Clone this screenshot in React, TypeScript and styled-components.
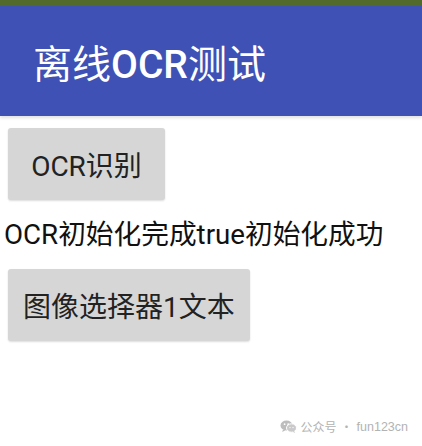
import React from 'react';
import styled, { createGlobalStyle } from 'styled-components';

const GlobalStyle = createGlobalStyle`
  html, body {
    margin: 0;
    padding: 0;
    background: #ffffff;
  }
  body {
    font-family: Roboto, 'Noto Sans CJK SC', sans-serif;
  }
`;

const Screen = styled.div`
  position: relative;
  width: 422px;
  height: 446px;
  overflow: hidden;
  background: #ffffff;
`;

const StatusStrip = styled.div`
  height: 6px;
  background: #536a2d;
`;

const AppBar = styled.div`
  height: 110px;
  display: flex;
  align-items: center;
  padding-left: 33px;
  background: #3f51b5;
  box-shadow: 0 2px 3px rgba(0, 0, 0, 0.12);
`;

const Title = styled.h1`
  margin: 0;
  font-size: 39px;
  font-weight: 400;
  color: #ffffff;
`;

const Latin = styled.span`
  font-weight: 500;
`;

const Content = styled.div`
  display: flex;
  flex-direction: column;
  align-items: flex-start;
  padding: 8px 4px;
`;

const Button = styled.button`
  margin: 4px;
  min-width: 157px;
  height: 72px;
  padding: 0 15px;
  border: none;
  border-radius: 3px;
  background: #d6d6d6;
  box-shadow: 0 1px 2px rgba(0, 0, 0, 0.14);
  font-family: Roboto, 'Noto Sans CJK SC', sans-serif;
  font-size: 28px;
  color: #222222;
  cursor: pointer;
`;

const StatusText = styled.div`
  padding: 13px 0 13px;
  font-size: 27.7px;
  line-height: 35px;
  color: #111111;
`;

const Watermark = styled.div`
  position: absolute;
  right: 14px;
  bottom: 11px;
  display: flex;
  align-items: center;
  gap: 4px;
  font-size: 12px;
  color: #b3b3b3;
  font-family: 'Noto Sans CJK SC', sans-serif;
`;

const Handle = styled.span`
  font-family: 'Liberation Sans', 'Noto Sans CJK SC', sans-serif;
  font-size: 12.5px;
`;

// two overlapping chat bubbles
const ChatIcon = () => (
  <svg width="17" height="13" viewBox="0 0 17 13">
    <ellipse cx="6.5" cy="5.5" rx="6" ry="5" fill="#bdbdbd" />
    <path d="M3 9.5 L2.2 12 L5.5 10.3 Z" fill="#bdbdbd" />
    <ellipse cx="11.5" cy="8" rx="5" ry="4.2" fill="#c9c9c9" stroke="#ffffff" strokeWidth="1" />
    <path d="M14 11 L15.2 13 L12.5 11.8 Z" fill="#c9c9c9" />
    <circle cx="4.6" cy="4.2" r="0.9" fill="#ffffff" />
    <circle cx="8.2" cy="4.2" r="0.9" fill="#ffffff" />
    <circle cx="10" cy="7.6" r="0.7" fill="#ffffff" />
    <circle cx="13" cy="7.6" r="0.7" fill="#ffffff" />
  </svg>
);

export default function App() {
  return (
    <Screen>
      <GlobalStyle />
      <StatusStrip />
      <AppBar>
        <Title>
          离线<Latin>OCR</Latin>测试
        </Title>
      </AppBar>
      <Content>
        <Button>OCR识别</Button>
        <StatusText>OCR初始化完成true初始化成功</StatusText>
        <Button>图像选择器1文本</Button>
      </Content>
      <Watermark>
        <ChatIcon />
        <span>公众号</span>
        <span>·</span>
        <Handle>fun123cn</Handle>
      </Watermark>
    </Screen>
  );
}
